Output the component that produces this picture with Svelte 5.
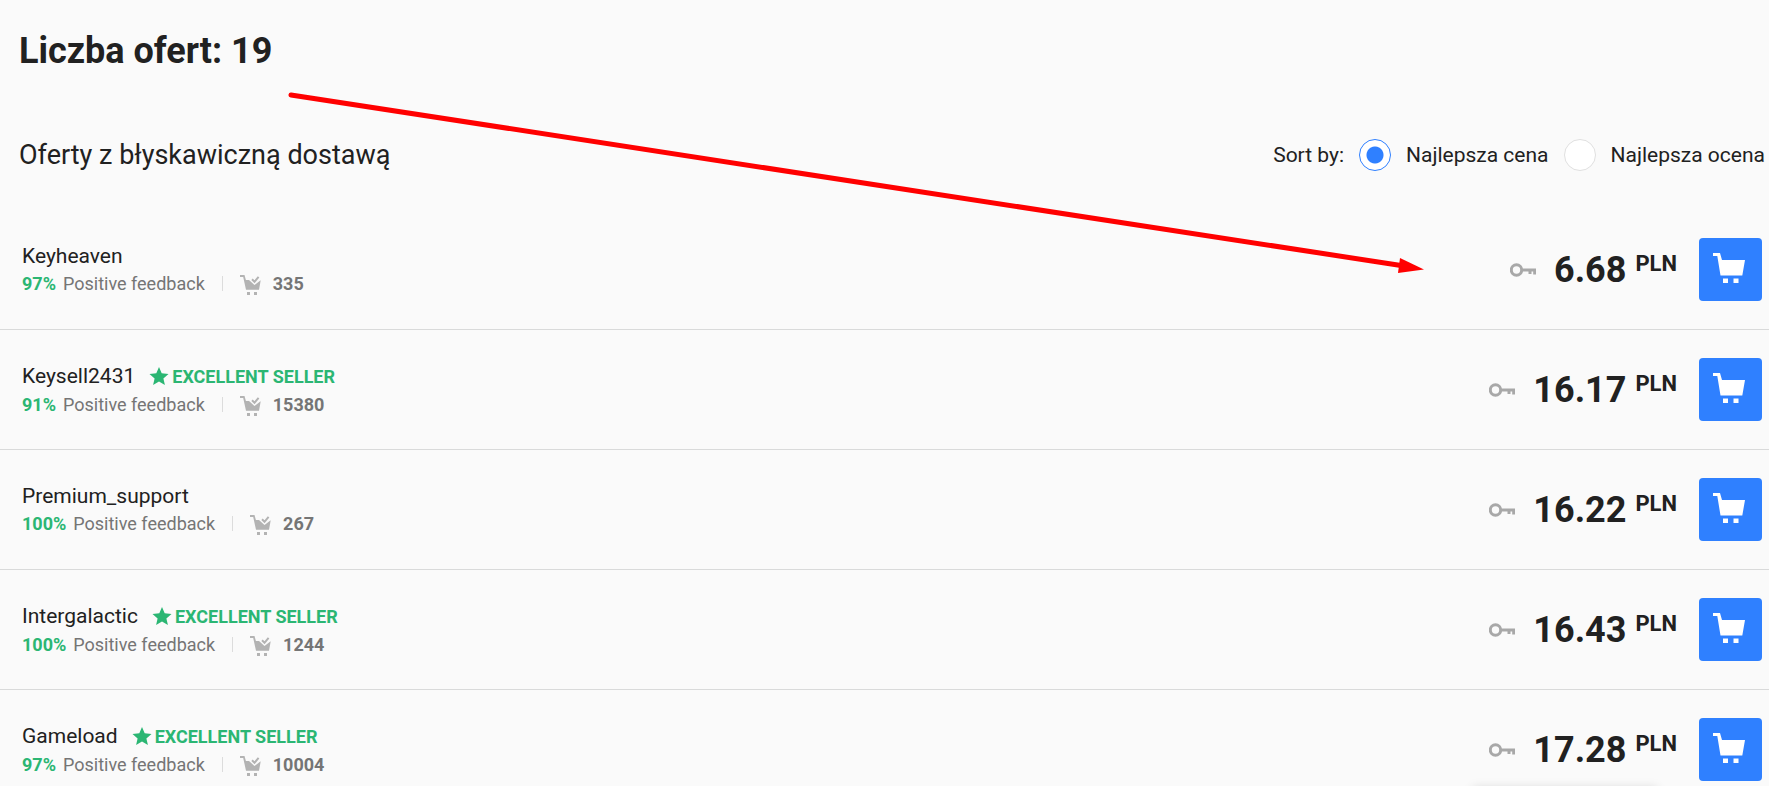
<script>
	let sort = $state('price');

	const offers = [
		{ seller: 'Keyheaven', excellent: false, feedback: 97, sold: 335, price: '6.68' },
		{ seller: 'Keysell2431', excellent: true, feedback: 91, sold: 15380, price: '16.17' },
		{ seller: 'Premium_support', excellent: false, feedback: 100, sold: 267, price: '16.22' },
		{ seller: 'Intergalactic', excellent: true, feedback: 100, sold: 1244, price: '16.43' },
		{ seller: 'Gameload', excellent: true, feedback: 97, sold: 10004, price: '17.28' },
	];
</script>

<main>
	<h1>Liczba ofert: 19</h1>

	<div class="toolbar">
		<h2>Oferty z błyskawiczną dostawą</h2>
		<div class="sort" role="radiogroup" aria-labelledby="sort-label">
			<span id="sort-label">Sort by:</span>
			<label>
				<input type="radio" name="sort" value="price" bind:group={sort}>
				Najlepsza cena
			</label>
			<label>
				<input type="radio" name="sort" value="rating" bind:group={sort}>
				Najlepsza ocena
			</label>
		</div>
	</div>

	<ul>
		{#each offers as offer}
			<li>
				<div class="seller">
					<div class="name">
						<span>{offer.seller}</span>
						{#if offer.excellent}
							<strong class="badge">
								<svg width="20" height="20" viewBox="0 0 20 20" aria-hidden="true">
									<path d="M10 0l2.700 6.300 6.800.6-5.100 4.500 1.500 6.700L10 14.600l-5.900 3.500 1.500-6.700L.5 6.900l6.800-.6z" />
								</svg>
								EXCELLENT SELLER
							</strong>
						{/if}
					</div>
					<div class="stats">
						<strong class="percent">{offer.feedback}%</strong>
						<span>Positive feedback</span>
						<span class="divider"></span>
						<svg width="21" height="22" viewBox="0 -2 21 22" aria-hidden="true">
							<path d="M0 0h4.500l1.400 5H9l5.500 5 6.200-4.700L19 14.700H6L3.200 2H0zM7 17h3v3H7zM14 17h3v3h-3z" />
							<path class="check" d="M12 4.300l2.500 2.500L18.600 1.800" />
						</svg>
						<strong>{offer.sold}</strong>
					</div>
				</div>

				<div class="price">
					<svg width="26" height="14" viewBox="0 0 26 14" aria-hidden="true">
						<circle cx="6.500" cy="7" r="5.200" />
						<path d="M12 7h14M20 7v4M24.700 7v4.500" />
					</svg>
					<span class="amount">{offer.price}</span>
					<span class="currency">PLN</span>
				</div>

				<button aria-label="Dodaj do koszyka">
					<svg width="35" height="35" viewBox="0 0 35 35" aria-hidden="true">
						<path d="M0 1h7l2 7h23L29.300 23.500H7.500L4.300 4H0zM10 26.500h5v4.500h-5zM20.500 26.500h5v4.500h-5z" />
					</svg>
				</button>
			</li>
		{/each}
	</ul>

	<svg class="arrow" width="1136" height="184" viewBox="0 0 1136 184" aria-hidden="true">
		<path class="shaft" d="M3 3L1113 173.500" />
		<path d="M1112 166L1136 177.500L1110 181z" />
	</svg>
	<div class="popup"></div>
</main>

<style>
	:global(body) {
		margin: 0;
		background: #fafafa;
	}

	main {
		position: relative;
		box-sizing: border-box;
		height: 100vh;
		overflow: hidden;
		padding-top: 29px;
		color: #212121;
		font-family: Roboto, sans-serif;
		font-size: 21px;
	}

	h1 {
		margin: 0 19px;
		font-size: 36px;
		line-height: 44px;
		font-weight: 700;
	}

	.toolbar {
		display: flex;
		align-items: center;
		justify-content: space-between;
		height: 32px;
		margin: 66px 4px 39px 19px;
	}

	h2 {
		margin: 0;
		font-size: 27px;
		font-weight: 400;
	}

	.sort,
	label {
		display: flex;
		align-items: center;
		gap: 15px;
	}

	input {
		appearance: none;
		box-sizing: border-box;
		width: 32px;
		height: 32px;
		margin: 0;
		border: 1px solid #e0e0e0;
		border-radius: 50%;
		background: #fff;
	}

	input:checked {
		border-color: #2f80ff;
		background: radial-gradient(circle, #2f80ff 8px, #fff 9px);
	}

	ul {
		margin: 0;
		padding: 0;
		list-style: none;
	}

	li {
		display: flex;
		align-items: center;
		height: 119px;
		padding: 0 7px 0 22px;
		border-bottom: 1px solid #d9dada;
	}

	.seller {
		flex: 1;
	}

	.name {
		display: flex;
		align-items: center;
		gap: 14px;
		line-height: 28px;
	}

	.badge {
		display: flex;
		align-items: center;
		gap: 3px;
		padding-top: 2px;
		color: #2bb673;
		font-size: 18px;
	}

	.badge svg {
		fill: #2bb673;
	}

	.stats {
		display: flex;
		align-items: center;
		color: #757575;
		font-size: 18px;
		line-height: 28px;
	}

	.stats .percent {
		margin-right: 7px;
		color: #2bb673;
	}

	.divider {
		width: 1px;
		height: 15px;
		margin: 0 17px;
		background: #dcdcdc;
	}

	.stats svg {
		margin-right: 12px;
		fill: #b3b3b3;
	}

	.stats .check {
		fill: none;
		stroke: #b3b3b3;
		stroke-width: 2;
	}

	.price {
		display: flex;
		align-items: center;
		font-weight: 700;
	}

	.price svg {
		margin-right: 18px;
		fill: none;
		stroke: #a8a8a8;
		stroke-width: 3;
	}

	.amount {
		font-size: 36px;
		line-height: 44px;
	}

	.currency {
		margin: 0 22px 12px 9px;
		font-size: 22px;
	}

	button {
		display: grid;
		place-items: center;
		width: 63px;
		height: 63px;
		padding: 0;
		border: 0;
		border-radius: 4px;
		background: #2f80ff;
	}

	button svg {
		fill: #fff;
	}

	.arrow {
		position: absolute;
		top: 92px;
		left: 288px;
		fill: #f00;
		pointer-events: none;
	}

	.shaft {
		stroke: #f00;
		stroke-width: 5;
		stroke-linecap: round;
	}

	.popup {
		position: absolute;
		right: 112px;
		bottom: -60px;
		width: 184px;
		height: 58px;
		box-shadow: 0 0 10px rgba(0, 0, 0, 0.15);
	}
</style>
